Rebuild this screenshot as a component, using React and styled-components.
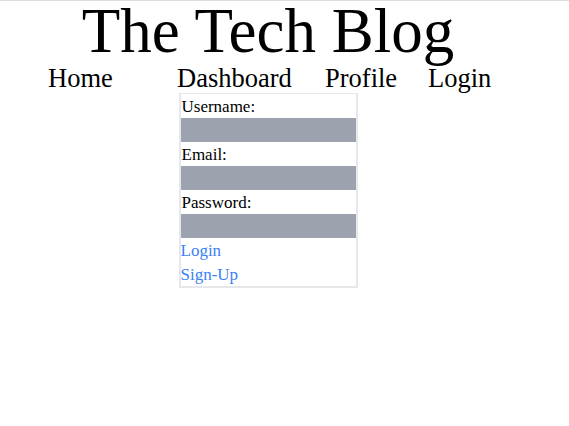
import React from "react";
import styled, { createGlobalStyle } from "styled-components";

const Global = createGlobalStyle`
  html, body { margin: 0; padding: 0; background: #fff; }
  body { font-family: "Liberation Serif", "Times New Roman", serif; color: #000; }
`;

const Page = styled.div`
  border-top: 1px solid #dedede;
`;

const Column = styled.div`
  width: 536px;
  display: flex;
  flex-direction: column;
  align-items: center;
`;

const Title = styled.h1`
  margin: 0;
  font-weight: 400;
  font-size: 63px;
  line-height: 60px;
  height: 60px;
  white-space: nowrap;
`;

const Nav = styled.nav`
  align-self: stretch;
  display: grid;
  grid-template-columns: 129px 148px 103px auto;
  padding-left: 48px;
  padding-top: 2px;
  height: 30px;
`;

const NavLink = styled.a`
  font-size: 26.5px;
  line-height: 30px;
  color: #000;
  text-decoration: none;
  white-space: nowrap;
`;

const Form = styled.form`
  width: 175px;
  border: 2px solid #e5e7eb;
  border-top-width: 1px;
  display: flex;
  flex-direction: column;
`;

const Label = styled.label`
  font-size: 17px;
  line-height: 24px;
  height: 23px;
  padding: 1px 0 0 1px;
`;

const Input = styled.input`
  display: block;
  box-sizing: border-box;
  width: 100%;
  height: 24px;
  margin: 0;
  border: none;
  padding: 0 4px;
  background: #9ca3af;
  font: inherit;
  outline: none;
`;

const FormLink = styled.a`
  font-size: 17px;
  line-height: 24px;
  height: 23px;
  padding-top: 1px;
  color: #3b82f6;
  text-decoration: none;
`;

export default function App() {
  return (
    <>
      <Global />
      <Page>
        <Column>
          <Title>The Tech Blog</Title>
          <Nav>
            <NavLink href="#">Home</NavLink>
            <NavLink href="#">Dashboard</NavLink>
            <NavLink href="#">Profile</NavLink>
            <NavLink href="#">Login</NavLink>
          </Nav>
          <Form onSubmit={(e) => e.preventDefault()}>
            <Label>Username:</Label>
            <Input type="text" />
            <Label>Email:</Label>
            <Input type="email" />
            <Label>Password:</Label>
            <Input type="password" />
            <FormLink href="#">Login</FormLink>
            <FormLink href="#">Sign-Up</FormLink>
          </Form>
        </Column>
      </Page>
    </>
  );
}
